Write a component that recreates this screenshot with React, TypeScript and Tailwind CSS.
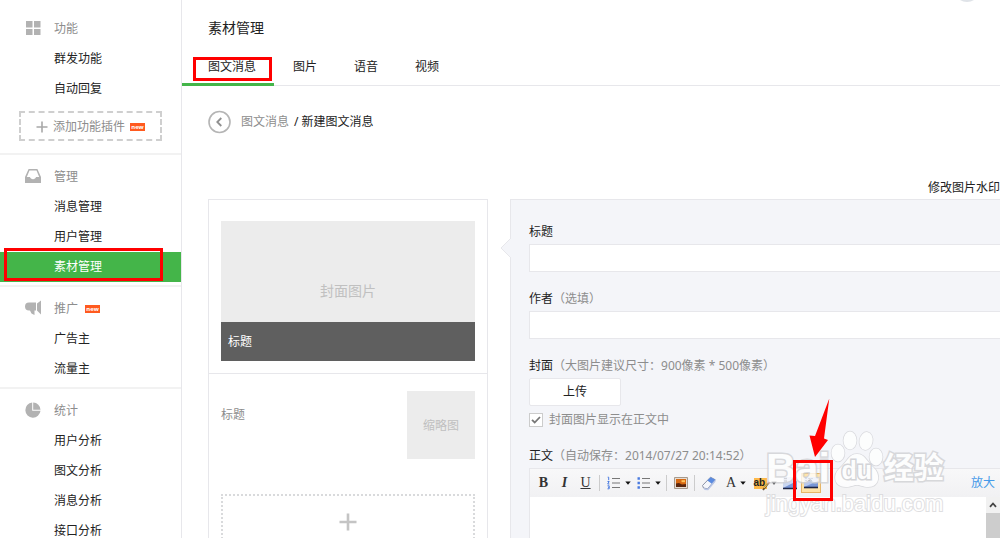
import type { ReactNode } from "react";

function NewBadge() {
  return (
    <span className="inline-flex h-2 w-[15px] items-center justify-center overflow-hidden bg-[#ff5a1f] text-[6px] leading-none font-bold text-white">
      new
    </span>
  );
}

function GridIcon() {
  return (
    <svg width="16" height="16" viewBox="0 0 16 16" fill="#b2b2b2">
      <path d="M1 1h6.500v6.500H1zM9 1h6.500v6.500H9zM1 9h6.500v6H1zM9 9h6.500v6H9z" />
    </svg>
  );
}

function InboxIcon() {
  return (
    <svg width="16" height="16" viewBox="0 0 16 16" fill="#b2b2b2">
      <path
        fillRule="evenodd"
        d="M3.6 1h8.8L16 9v6H0V9zM4.5 2.4 1.8 9H5c.3 1.3 1.500 2.200 3 2.200s2.700-.9 3-2.200h3.200l-2.700-6.600z"
      />
    </svg>
  );
}

function HornIcon() {
  return (
    <svg width="16" height="16" viewBox="0 0 16 16" fill="#b2b2b2">
      <path d="M4 2.500h7v8H9.500v4.500l-3-1.500L5 10.500H4a4 4 0 0 1 0-8zM12 3.500 16 .5v14l-4-4z" />
    </svg>
  );
}

function PieIcon() {
  return (
    <svg width="16" height="16" viewBox="0 0 16 16" fill="#b2b2b2">
      <path d="M7.200.5v8.300h8.300A7.600 7.600 0 1 1 7.200.5z" />
      <path d="M8.200.5a7.500 7.500 0 0 1 7.300 7.300H8.200z" />
    </svg>
  );
}

function NavItem({ label, active = false }: { label: string; active?: boolean }) {
  return (
    <li className="relative">
      <a
        href="#"
        className={
          active
            ? "flex h-[30px] items-center bg-[#44b549] pl-[54px] text-white"
            : "flex h-[30px] items-center pl-[54px] text-[#222]"
        }
      >
        {label}
      </a>
      {active && (
        <span className="pointer-events-none absolute -top-1 right-[18px] left-1 h-[33px] border-3 border-[#f00]" />
      )}
    </li>
  );
}

function NavGroup({
  icon,
  title,
  items,
  active,
  badge = false,
}: {
  icon: ReactNode;
  title: string;
  items: string[];
  active?: string;
  badge?: boolean;
}) {
  return (
    <section className="border-t-2 border-[#f2f2f2] pt-[7px] pb-[3px]">
      <h3 className="flex h-[30px] items-center pl-[25px] text-[#8d8d8d]">
        <span className="mr-[13px] pb-[3px]">{icon}</span>
        {title}
        {badge && (
          <span className="ml-[7px] flex">
            <NewBadge />
          </span>
        )}
      </h3>
      <ul>
        {items.map((item) => (
          <NavItem key={item} label={item} active={item === active} />
        ))}
      </ul>
    </section>
  );
}

function Sidebar() {
  return (
    <nav className="w-[182px] shrink-0 border-r border-[#e7e7eb]">
      <section className="pt-[14px] pb-3">
        <h3 className="flex h-[30px] items-center pl-[25px] text-[#8d8d8d]">
          <span className="mr-[13px] pb-[3px]">
            <GridIcon />
          </span>
          功能
        </h3>
        <ul>
          <NavItem label="群发功能" />
          <NavItem label="自动回复" />
        </ul>
        <a
          href="#"
          className="mx-[19px] mt-[7px] flex h-[30px] items-center justify-center border-2 border-dashed border-[#cfcfcf] pt-[2px] text-[#8d8d8d]"
        >
          <svg width="12" height="12" viewBox="0 0 12 12" className="mr-[5px]">
            <path d="M6 .5v11M.5 6h11" stroke="#a8a8a8" strokeWidth="1.600" />
          </svg>
          添加功能插件
          <span className="ml-[5px] flex">
            <NewBadge />
          </span>
        </a>
      </section>
      <NavGroup icon={<InboxIcon />} title="管理" items={["消息管理", "用户管理", "素材管理"]} active="素材管理" />
      <NavGroup icon={<HornIcon />} title="推广" items={["广告主", "流量主"]} badge />
      <NavGroup icon={<PieIcon />} title="统计" items={["用户分析", "图文分析", "消息分析", "接口分析"]} />
    </nav>
  );
}

function Header() {
  return (
    <header className="border-b border-[#e7e7eb]">
      <h1 className="pt-[18px] pl-[26px] text-sm leading-5 text-[#222]">素材管理</h1>
      <div className="mt-[10px] -mb-px flex gap-px">
        <a href="#" className="relative flex h-[38px] items-center border-b-3 border-[#44b549] pt-[2px] pr-[18px] pl-[26px]">
          图文消息
          <span className="pointer-events-none absolute top-[9px] right-[2px] left-[11px] h-6 border-3 border-[#f00]" />
        </a>
        {["图片", "语音", "视频"].map((tab) => (
          <a key={tab} href="#" className="flex h-[35px] items-center px-[18px] pt-[2px]">
            {tab}
          </a>
        ))}
      </div>
    </header>
  );
}

function Breadcrumb() {
  return (
    <div className="mt-6 flex h-6 items-center pl-[26px]">
      <a href="#" aria-label="返回" className="mr-[9px]">
        <svg width="24" height="24" viewBox="0 0 24 24" fill="none">
          <circle cx="11.500" cy="12" r="10.500" stroke="#b5b5b5" strokeWidth="1.600" />
          <path d="M13.300 8 9.300 12l4 4" stroke="#8f8f8f" strokeWidth="1.800" />
        </svg>
      </a>
      <a href="#" className="text-[#8d8d8d]">
        图文消息
      </a>
      <span className="ml-[5px]">/ 新建图文消息</span>
    </div>
  );
}

function PreviewCard() {
  return (
    <section className="w-[280px] shrink-0 border border-[#e7e7eb]">
      <div className="border-b border-[#e7e7eb] px-3 pt-[21px] pb-3">
        <div className="flex h-[101px] items-end justify-center bg-[#ececec] pb-[21px] text-sm leading-5 text-[#c0c0c0]">
          封面图片
        </div>
        <div className="flex h-[39px] items-center bg-[#5f5f5f] pl-[7px] text-white">标题</div>
      </div>
      <div className="flex justify-between px-3 pt-[17px]">
        <span className="pt-[14px] leading-5 text-[#8d8d8d]">标题</span>
        <div className="flex size-[68px] items-center justify-center bg-[#ececec] pt-[2px] text-[#c0c0c0]">缩略图</div>
      </div>
      <button
        type="button"
        aria-label="添加"
        className="mx-3 mt-[35px] flex h-[72px] w-[254px] justify-center border-2 border-dotted border-[#d9dadc] pt-[17px]"
      >
        <svg width="18" height="18" viewBox="0 0 18 18">
          <path d="M9 .5v17M.5 9h17" stroke="#c4c4c4" strokeWidth="2.600" />
        </svg>
      </button>
    </section>
  );
}

function Caret() {
  return (
    <svg width="6" height="4" viewBox="0 0 6 4" className="shrink-0">
      <path d="M.3.5h5.400L3 3.700z" fill="#111" />
    </svg>
  );
}

function ToolButton({ label, children }: { label: string; children: ReactNode }) {
  return (
    <button type="button" aria-label={label} className="flex h-5 w-[21px] shrink-0 items-center justify-center">
      {children}
    </button>
  );
}

function DropButton({ label, children }: { label: string; children: ReactNode }) {
  return (
    <button type="button" aria-label={label} className="flex h-5 w-[30px] shrink-0 items-center justify-center gap-1 pl-[2px]">
      {children}
      <Caret />
    </button>
  );
}

function Separator() {
  return <span className="mx-[3px] h-4 w-px shrink-0 bg-[#ccc]" />;
}

function EditorToolbar() {
  return (
    <div className="flex h-7 items-center bg-linear-to-b from-[#f8f8f9] to-[#f1f1f3] pl-[3px]">
      <div className="flex items-center font-['Liberation_Serif',serif] text-sm text-[#333]">
        <ToolButton label="加粗">
          <b>B</b>
        </ToolButton>
        <ToolButton label="斜体">
          <b className="italic">I</b>
        </ToolButton>
        <ToolButton label="下划线">
          <span className="underline">U</span>
        </ToolButton>
      </div>
      <Separator />
      <DropButton label="有序列表">
        <svg width="14" height="14" viewBox="0 0 14 14" fill="none">
          <path d="M5 2.500h8M5 7h8M5 11.500h8" stroke="#777" strokeWidth="1.200" />
          <path d="M.7 1.200h1v3M.5 5.500h1.700L.7 8h1.700M.5 9.800h1.700v3H.5M1 11.300h1.200" stroke="#4a7be0" />
        </svg>
      </DropButton>
      <DropButton label="无序列表">
        <svg width="14" height="14" viewBox="0 0 14 14">
          <path d="M5 2.500h8M5 7h8M5 11.500h8" stroke="#777" strokeWidth="1.200" />
          <path d="M.5 1.300h2.400v2.400H.5zM.5 5.800h2.400v2.400H.5zM.5 10.300h2.400v2.400H.5z" fill="#4a7be0" />
        </svg>
      </DropButton>
      <Separator />
      <ToolButton label="图片">
        <svg width="14" height="12" viewBox="0 0 14 12">
          <path d="M.5.5h13v11H.5z" fill="#e7ddd2" stroke="#a79a8d" />
          <path d="M2 2h10v8H2z" fill="#d96a12" />
          <path d="M2 6.500 5 6l3 1.500 4-.5v3H2z" fill="#5c260c" />
          <path d="M7.500 3.200h3.500v2H7.500z" fill="#ffc35a" />
        </svg>
      </ToolButton>
      <Separator />
      <ToolButton label="清除格式">
        <svg width="16" height="15" viewBox="0 0 16 15" strokeLinejoin="round" className="shrink-0">
          <path d="m1.500 9.500 8-8.300 4.800 2.600-7.800 9-4-.8z" fill="#f4f6fb" stroke="#8b93a6" />
          <path d="m6.300 4.600 3.300-3.400 4.700 2.600-3.500 4z" fill="#5b8be0" />
          <path d="m2.500 12 4 .8 7.800-9 .2 2-7.300 8.400-3.700-.3z" fill="#b9c6e6" />
        </svg>
      </ToolButton>
      <DropButton label="字体颜色">
        <span className="pl-[2px] font-['Liberation_Serif',serif] text-sm text-[#333]">A</span>
      </DropButton>
      <DropButton label="背景颜色">
        <span className="relative flex h-[11px] w-[13px] shrink-0 items-center bg-[#fdb94a] font-['Liberation_Sans',sans-serif] text-[10px] leading-none font-bold text-[#222]">
          ab
          <svg width="9" height="11" viewBox="0 0 9 11" className="absolute top-[2px] left-[8px]">
            <path d="M1 10 6.500 3" stroke="#6b5030" strokeWidth="1.800" />
            <path d="M2.200 8 6 3.300" stroke="#f1cf61" />
            <path d="m5.800 2.800 1-1.500 1.500 1-1 1.500z" fill="#dd3b35" />
          </svg>
        </span>
      </DropButton>
      <ToolButton label="行距">
        <svg width="14" height="13" viewBox="0 0 14 13">
          <path d="M0 0h14v11H0z" fill="#c9d6f0" />
          <path d="M0 11 14 4v7z" fill="#7896d6" />
          <path d="M1 1.500h3M1 4h3M0 11.500h14" stroke="#1d2545" strokeWidth="1.600" />
        </svg>
      </ToolButton>
      <button
        type="button"
        aria-label="背景图"
        className="relative ml-px flex h-5 w-5 shrink-0 items-center justify-center border border-[#e6b566] bg-[#ffe3a8]"
      >
        <svg width="14" height="14" viewBox="0 0 14 14" className="shrink-0">
          <path d="M0 1h14v10H0z" fill="#b7c7ec" />
          <path d="M1 2.500h9M1 4.500h7" stroke="#4c5676" strokeDasharray="2 1" />
          <path d="M0 11 14 5v6z" fill="#7896d6" />
          <path d="M0 11.500h14" stroke="#1d2545" strokeWidth="1.600" />
        </svg>
        <span className="pointer-events-none absolute -top-[14px] -left-[9px] z-20 h-[41px] w-10 border-3 border-[#f00]" />
        <svg
          width="22"
          height="60"
          viewBox="0 0 22 60"
          className="pointer-events-none absolute -top-[76px] left-[7px] z-20"
        >
          <path d="M20.300.5 15 40.500l4 1.500L6 59 .5 37.500l5.500.5z" fill="#f00" />
        </svg>
      </button>
      <a href="#" className="mr-[5px] ml-auto shrink-0 text-[#459ae9]">
        放大
      </a>
    </div>
  );
}

function EditorForm() {
  return (
    <form className="relative min-w-0 flex-1 border-t border-l border-[#e7e7eb] bg-[#f4f5f9] pl-[18px]">
      <svg width="12" height="22" viewBox="0 0 12 22" className="absolute top-[37px] -left-[11px]">
        <path d="M12 0 1 11l11 11z" fill="#f4f5f9" />
        <path d="M11 1 1 11l10 10" fill="none" stroke="#e7e7eb" />
      </svg>
      <label htmlFor="title" className="block pt-[22px] leading-5">
        标题
      </label>
      <input
        id="title"
        className="mt-[2px] block h-7 w-full border border-r-0 border-[#e7e7eb] bg-white px-2 outline-none"
      />
      <label htmlFor="author" className="mt-[17px] block leading-5">
        作者<span className="text-[#8d8d8d]">（选填）</span>
      </label>
      <input
        id="author"
        className="mt-[2px] block h-7 w-full border border-r-0 border-[#e7e7eb] bg-white px-2 outline-none"
      />
      <p className="mt-[17px] leading-5">
        封面<span className="text-[#8d8d8d]">（大图片建议尺寸：900像素 * 500像素）</span>
      </p>
      <button
        type="button"
        className="mt-[2px] block h-7 w-[92px] rounded-[2px] border border-[#e7e7eb] bg-white text-[#222]"
      >
        上传
      </button>
      <label className="mt-1 flex h-5 items-center gap-[6px] text-[#8d8d8d]">
        <span className="relative flex size-[14px]">
          <input
            type="checkbox"
            defaultChecked
            className="peer size-[14px] appearance-none border border-[#ccc] bg-white"
          />
          <svg
            width="10"
            height="8"
            viewBox="0 0 10 8"
            className="pointer-events-none absolute top-[3px] left-[2px] hidden peer-checked:block"
          >
            <path d="m1 3.800 2.700 2.700L9 1" fill="none" stroke="#777" strokeWidth="1.800" />
          </svg>
        </span>
        封面图片显示在正文中
      </label>
      <label htmlFor="body" className="mt-4 block leading-5">
        正文<span className="text-[#8d8d8d]">（自动保存：2014/07/27 20:14:52）</span>
      </label>
      <div className="mt-[2px] border-t border-l border-[#e7e7eb] bg-white">
        <EditorToolbar />
        <div className="flex">
          <textarea id="body" className="block h-40 min-w-0 flex-1 resize-none p-2 outline-none" />
          <div className="flex w-[14px] flex-col items-center bg-[#f1f1f1]">
            <svg width="8" height="6" viewBox="0 0 8 6" className="my-[5px] shrink-0">
              <path d="m1 4.800 3-3.300 3 3.300" fill="none" stroke="#444" strokeWidth="1.800" />
            </svg>
            <div className="w-full flex-1 bg-[#cdcdcd]" />
          </div>
        </div>
      </div>
    </form>
  );
}

function Watermark() {
  return (
    <div className="pointer-events-none absolute top-[430px] right-[54px] z-10 w-[180px] font-['Liberation_Sans','Noto_Sans_CJK_SC',sans-serif] whitespace-nowrap text-white opacity-80 [paint-order:stroke]">
      <div className="flex h-[60px] items-end">
        <span className="text-[41px] leading-[44px] font-bold [-webkit-text-stroke:3px_#d0d1d4]">Bai</span>
        <div className="relative flex shrink-0">
          <svg width="54" height="60" viewBox="0 0 54 60" fill="#fff" stroke="#d3d4d8" strokeWidth="1.500">
            <ellipse cx="8" cy="23" rx="6.500" ry="8.500" />
            <ellipse cx="20" cy="10.500" rx="6.500" ry="9" />
            <ellipse cx="36" cy="11" rx="6.500" ry="9" transform="rotate(10 36 11)" />
            <ellipse cx="46" cy="27" rx="6.500" ry="8.500" />
            <path d="M27 24c8 0 10 8 16 13 8 7 7 20-5 20-5 0-7-2-11-2s-6 2-11 2C4 57 2 45 10 38c7-6 9-14 17-14z" />
          </svg>
          <span className="absolute inset-x-0 bottom-1 text-center text-[25px] leading-8 font-bold [-webkit-text-stroke:3px_#cbccd0]">
            du
          </span>
        </div>
        <span className="text-[30px] leading-[44px] font-bold [-webkit-text-stroke:3px_#d0d1d4]">经验</span>
      </div>
      <div className="text-[22px] leading-7 [-webkit-text-stroke:2px_#d8d8da]">jingyan.baidu.com</div>
    </div>
  );
}

export default function App() {
  return (
    <div className="relative flex h-screen overflow-hidden bg-white font-['Noto_Sans','Noto_Sans_CJK_SC',sans-serif] text-xs text-[#222]">
      <Sidebar />
      <main className="min-w-0 flex-1">
        <Header />
        <Breadcrumb />
        <div className="mt-[43px] flex h-[22px] items-center justify-end">
          <a href="#" className="shrink-0">
            修改图片水印
          </a>
        </div>
        <div className="flex items-start gap-[22px] pl-[26px]">
          <PreviewCard />
          <EditorForm />
        </div>
      </main>
      <div className="absolute -top-6 right-5 size-[26px] rounded-full bg-[#dfe3e8]" />
      <Watermark />
    </div>
  );
}
